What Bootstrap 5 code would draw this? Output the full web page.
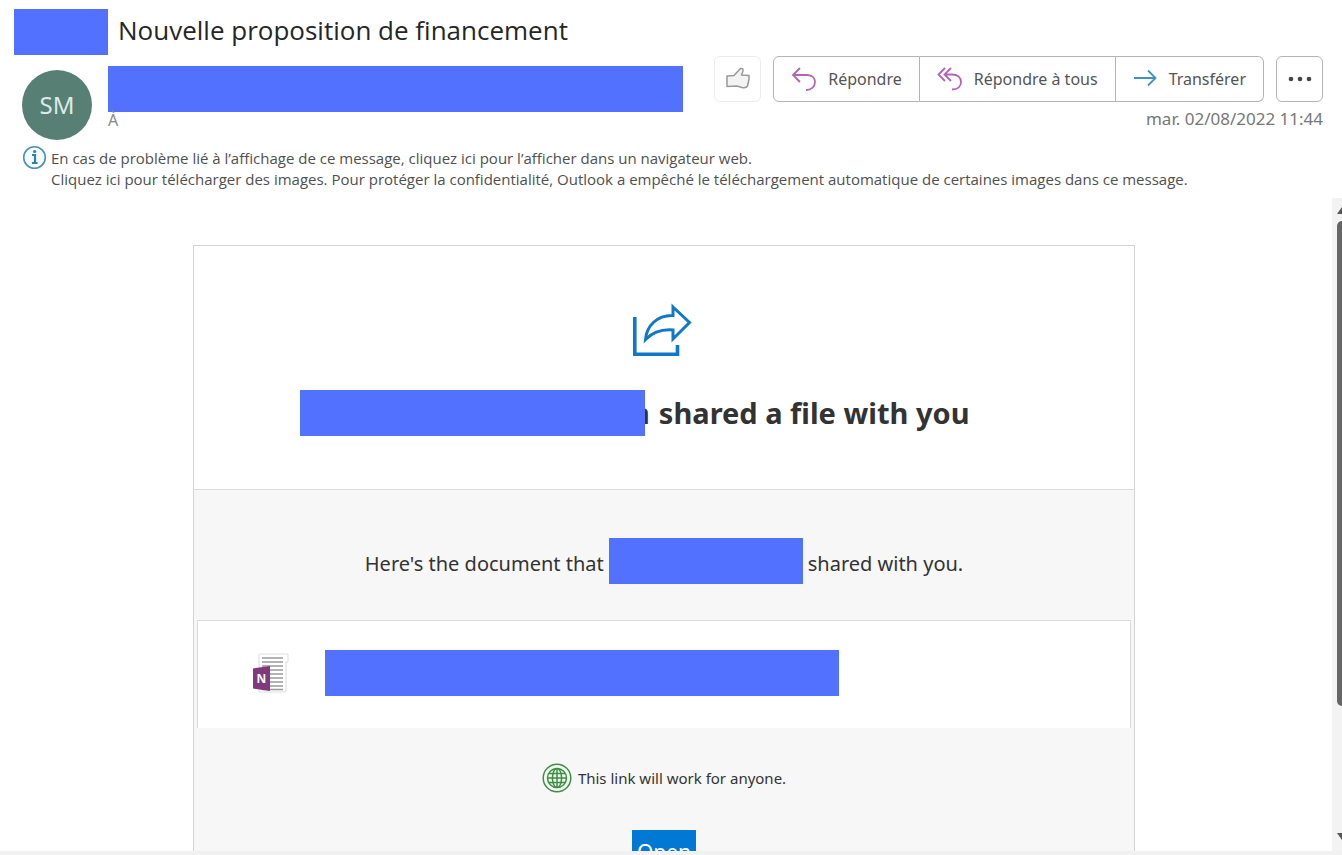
<!DOCTYPE html>
<html lang="fr">
<head>
<meta charset="utf-8">
<meta name="viewport" content="width=device-width, initial-scale=1">
<title>Nouvelle proposition de financement</title>
<link href="https://cdn.jsdelivr.net/npm/bootstrap@5.3.0/dist/css/bootstrap.min.css" rel="stylesheet">
<style>
  body { font-family: "Noto Sans", "Open Sans", sans-serif; color: #444; background: #fff; }
  .redacted { display: inline-block; flex: none; height: 46px; background: #5271ff; }
  .r-tag { width: 94px; }
  .r-sender { width: 575px; max-width: 100%; }
  .r-name { width: 345px; }
  .r-first { width: 194px; }
  .r-file { width: 514px; }
  .subject-bar { padding: 9px 14px 0; gap: 10px; }
  .subject-text { font-family: "Open Sans", sans-serif; font-size: 26px; line-height: 42px; color: #262626; }
  .sender-row { padding: 1px 19px 0 22px; }
  .avatar { width: 70px; height: 70px; margin: 14px 16px 0 0; background: #587f74; color: #dcebe6; font-size: 24px; }
  .sender-info { padding-top: 10px; }
  .to-line { font-size: 16px; line-height: 16px; color: #888; }
  .actions { gap: 12px; }
  .act { height: 46px; font-size: 16px; line-height: 24px; color: #555; border: 1px solid #b4b4b4; border-radius: 6px; padding: 0 17px; gap: 11px; background: #fff; }
  .act-like, .act-more { width: 47px; padding: 0; }
  .act-like { border-color: #ececec; }
  .stamp { font-size: 17px; line-height: 24px; color: #777; padding-top: 5px; }
  .info-bar { padding: 5px 22px 0; gap: 4px; font-family: "Open Sans", sans-serif; font-size: 15px; line-height: 21px; color: #505050; }
  .info-bar a { color: inherit; text-decoration: none; }
  .info-text { padding-top: 3px; }
  .reading { padding-top: 8px; min-height: 0; }
  .mail { padding: 47px 14px 0 10px; min-width: 0; }
  .mail-frame { max-width: 942px; border: 1px solid #d4d4d4; background: #f7f7f7; color: #333; }
  .mail-head { height: 244px; padding-top: 57px; background: #fff; border-bottom: 1px solid #dcdcdc; }
  .share-icon { margin: 0 auto; padding-right: 4px; }
  .mail-title { padding: 31px 0 0 106px; font-size: 29px; line-height: 50px; font-weight: 700; color: #333; white-space: nowrap; }
  .covered { margin-left: -14px; margin-right: 9px; }
  .mail-title .redacted { position: relative; z-index: 1; }
  .intro { padding: 48px 0 36px; font-size: 20px; line-height: 40px; gap: 5px; }
  .intro-text { padding-top: 6px; }
  .file-card { margin: 0 3px; height: 108px; border: 1px solid #d9d9d9; border-bottom: 0; background: #fff; padding: 0 55px 3px; gap: 36px; }
  .link-note { padding-top: 35px; font-size: 15px; line-height: 30px; gap: 6px; }
  .open-link { width: 64px; height: 44px; margin-top: 37px; background: #0078d4; color: #fff; font-size: 21px; line-height: 44px; text-decoration: none; }
  .scroller { width: 10px; background: #f3f3f3; padding: 8px 0 10px; overflow: hidden; }
  .thumb { width: 12px; height: 485px; margin: 7px 0 0 5px; border-radius: 5px; background: #666; }
  .foot { height: 4px; background: #f1f1f1; }
</style>
</head>
<body>
<div class="d-flex flex-column vh-100 overflow-hidden">
  <header>
    <div class="subject-bar d-flex">
      <span class="redacted r-tag"></span>
      <h1 class="subject-text m-0 fw-normal">Nouvelle proposition de financement</h1>
    </div>
    <div class="sender-row d-flex align-items-start">
      <div class="avatar rounded-circle d-flex align-items-center justify-content-center flex-shrink-0">SM</div>
      <div class="sender-info flex-grow-1">
        <span class="redacted r-sender d-block"></span>
        <div class="to-line">À</div>
      </div>
      <div class="flex-shrink-0">
        <div class="actions d-flex">
          <button type="button" class="act act-like d-flex align-items-center justify-content-center" aria-label="J’aime">
            <svg width="26" height="24" viewBox="0 0 26 24" fill="#f3f3f3" stroke="#999" stroke-width="1.5" stroke-linejoin="round"><path d="M2 9 L9 8.500 L15.500 1.500 Q18.500 1 18 4 L16.500 8 L24 8.500 V12 L22.500 19 Q21 21.500 17 20.500 L12 19 L2 19.500 Z"/></svg>
          </button>
          <div class="btn-group" role="group" aria-label="Réponse">
            <button type="button" class="act d-flex align-items-center rounded-end-0">
              <svg width="26" height="26" viewBox="0 0 26 26" fill="none" stroke="#b066b4" stroke-width="1.800"><path d="M9 2 L2 9 L9 16 M2 9 H16 C22 9 24 13 24 16 C24 21 20 24 15 24"/></svg>
              Répondre
            </button>
            <button type="button" class="act d-flex align-items-center rounded-0 border-start-0">
              <svg width="26" height="26" viewBox="0 0 26 26" fill="none" stroke="#b066b4" stroke-width="1.800"><path d="M8 2 L1.500 8.500 L8 15 M14 2 L7.500 8.500 L14 15 M8 8.500 H15 C21 8.500 24 12 24 16 C24 20 21 23.500 15 23.500"/></svg>
              Répondre à tous
            </button>
            <button type="button" class="act d-flex align-items-center rounded-start-0 border-start-0">
              <svg width="25" height="26" viewBox="0 0 25 26" fill="none" stroke="#3f93bf" stroke-width="1.800"><path d="M1 12 H22 M15 4.500 L22.500 12 L15 19.500"/></svg>
              Transférer
            </button>
          </div>
          <button type="button" class="act act-more d-flex align-items-center justify-content-center" aria-label="Autres actions">
            <svg width="24" height="6" viewBox="0 0 24 6" fill="#444"><circle cx="3" cy="3" r="2.300"/><circle cx="12" cy="3" r="2.300"/><circle cx="21" cy="3" r="2.300"/></svg>
          </button>
        </div>
        <div class="stamp text-end">mar. 02/08/2022 11:44</div>
      </div>
    </div>
    <div class="info-bar d-flex align-items-start">
      <svg class="flex-shrink-0" width="25" height="25" viewBox="0 0 25 25"><circle cx="12.500" cy="12.500" r="10.800" fill="#f3fbff" stroke="#4f91b5" stroke-width="1.600"/><path d="M10 10 H13 V17.500 M10 18 H15.500" fill="none" stroke="#2b80b0" stroke-width="2.200"/><circle cx="12.700" cy="6.500" r="1.600" fill="#2b80b0"/></svg>
      <div class="info-text">
        <a href="#" class="d-block">En cas de problème lié à l’affichage de ce message, cliquez ici pour l’afficher dans un navigateur web.</a>
        <a href="#" class="d-block">Cliquez ici pour télécharger des images. Pour protéger la confidentialité, Outlook a empêché le téléchargement automatique de certaines images dans ce message.</a>
      </div>
    </div>
  </header>

  <main class="reading d-flex flex-grow-1 overflow-hidden">
    <div class="mail flex-grow-1 overflow-hidden">
      <article class="mail-frame mx-auto">
        <div class="mail-head">
          <svg class="share-icon d-block" width="64" height="54" viewBox="0 0 60 54" fill="none" stroke="#0f78c8" stroke-width="3.600"><path d="M2.800 14 V51.200 H45.500 V42"/><path stroke-width="3" d="M41 4 L57.500 19.500 L41 36 V27 C29 26 21 29 13.500 36.500 C14.500 23 25 12 41 12.500 Z"/></svg>
          <h2 class="mail-title m-0 d-flex align-items-center"><span class="redacted r-name"></span><span class="covered">n</span>shared a file with you</h2>
        </div>
        <div class="intro d-flex justify-content-center align-items-center">
          <span class="intro-text">Here's the document that</span><span class="redacted r-first"></span><span class="intro-text">shared with you.</span>
        </div>
        <div class="file-card d-flex align-items-center">
          <svg class="flex-shrink-0" width="36" height="40" viewBox="0 0 36 40"><path d="M6 1 H35 V9 H33 V39 H6 Z" fill="#fff" stroke="#dedede"/><path d="M9 5 H30 M9 9 H30 M9 13 H30 M9 17 H30 M9 21 H30 M9 25 H30 M9 29 H30 M9 33 H30 M9 36.500 H30" stroke="#999" stroke-width="1.600"/><path d="M0 15.500 L17 13 V38 L0 35.500 Z" fill="#80397b"/><text x="8.500" y="30" text-anchor="middle" font-family="Open Sans, sans-serif" font-size="12" font-weight="700" fill="#fff">N</text></svg>
          <span class="redacted r-file"></span>
        </div>
        <div class="link-note d-flex justify-content-center align-items-center">
          <svg width="30" height="30" viewBox="0 0 30 30" fill="none" stroke="#3f8f43" stroke-width="1.500"><circle cx="15" cy="15" r="13.800" fill="#f2faf2"/><circle cx="15" cy="15" r="9.500"/><ellipse cx="15" cy="15" rx="4.600" ry="9.500"/><path d="M15 5.500 V24.500 M5.500 15 H24.500 M7 10.500 H23 M7 19.500 H23"/></svg>
          <span>This link will work for anyone.</span>
        </div>
        <a href="#" class="open-link d-block mx-auto text-center">Open</a>
      </article>
    </div>
    <div class="scroller flex-shrink-0 d-flex flex-column align-items-start">
      <svg class="flex-shrink-0" width="14" height="8" viewBox="0 0 14 8"><path d="M5 8 L10 1 L14 8 Z" fill="#555"/></svg>
      <div class="thumb flex-shrink-0"></div>
      <svg class="flex-shrink-0 mt-auto" width="14" height="8" viewBox="0 0 14 8"><path d="M5 0 H14 L10 7 Z" fill="#555"/></svg>
    </div>
  </main>
  <footer class="foot flex-shrink-0"></footer>
</div>
<script src="https://cdn.jsdelivr.net/npm/bootstrap@5.3.0/dist/js/bootstrap.bundle.min.js"></script>
</body>
</html>
